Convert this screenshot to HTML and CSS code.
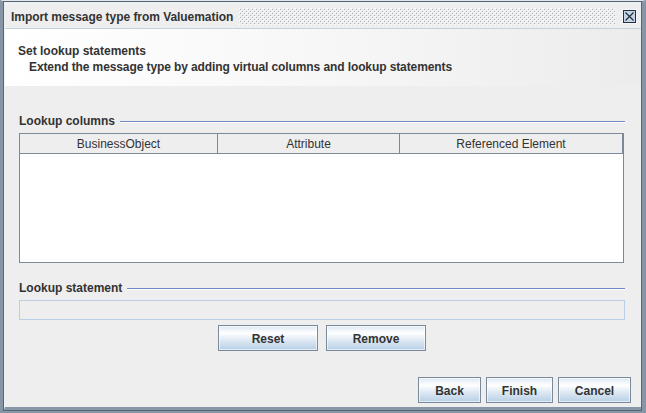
FILE: index.html
```html
<!DOCTYPE html>
<html>
<head>
<meta charset="utf-8">
<link rel="stylesheet" href="styles.css">
</head>
<body>
<div class="window">
  <div class="frame">
    <div class="pane">
      <div class="titlebar">
        <span class="title">Import message type from Valuemation</span>
        <svg class="bumps" xmlns="http://www.w3.org/2000/svg">
          <defs>
            <pattern id="bp" width="4" height="4" patternUnits="userSpaceOnUse">
              <rect x="0" y="0" width="1" height="1" fill="#ffffff"/>
              <rect x="2" y="2" width="1" height="1" fill="#ffffff"/>
              <rect x="1" y="1" width="1" height="1" fill="#a3abb3"/>
              <rect x="3" y="3" width="1" height="1" fill="#a3abb3"/>
            </pattern>
          </defs>
          <rect width="100%" height="100%" fill="url(#bp)"/>
        </svg>
        <svg class="close" width="15" height="15" viewBox="0 0 15 15" xmlns="http://www.w3.org/2000/svg">
          <rect x="0.5" y="0.5" width="14" height="14" fill="#c4d5e7" stroke="#f2f6fa"/>
          <rect x="1.5" y="1.5" width="12" height="12" fill="none" stroke="#26303c"/>
          <path d="M3.5 3.5 L11.5 11.5 M11.5 3.5 L3.5 11.5" stroke="#26303c" stroke-width="1.2" fill="none"/>
        </svg>
      </div>
      <div class="header">
        <div class="h-title">Set lookup statements</div>
        <div class="h-sub">Extend the message type by adding virtual columns and lookup statements</div>
      </div>
      <div class="content">
        <div class="section-title"><span>Lookup columns</span><div class="rule"></div></div>
        <div class="table">
          <div class="thead">
            <div class="th">BusinessObject</div>
            <div class="th">Attribute</div>
            <div class="th">Referenced Element</div>
          </div>
          <div class="tbody"></div>
        </div>
        <div class="section-title second"><span>Lookup statement</span><div class="rule"></div></div>
        <div class="field"></div>
        <div class="actions">
          <button class="btn wide">Reset</button>
          <button class="btn wide">Remove</button>
        </div>
      </div>
      <div class="footer">
        <button class="btn back">Back</button>
        <button class="btn finish">Finish</button>
        <button class="btn cancel">Cancel</button>
      </div>
    </div>
  </div>
</div>
</body>
</html>
```

FILE: styles.css
```css
html, body {
  margin: 0;
  padding: 0;
}
body {
  background: #eeeeee;
  font-family: "Liberation Sans", Arial, sans-serif;
  font-size: 12px;
  color: #333333;
}
.window {
  width: 646px;
  height: 413px;
  box-sizing: border-box;
  border-style: solid;
  border-color: #e3e7eb #8696a7 #8696a7 #8696a7;
  border-width: 1px 4px 2px 3px;
}
.frame {
  height: 100%;
  box-sizing: border-box;
  border: 1px solid #566678;
}
.pane {
  height: 100%;
  box-sizing: border-box;
  border-style: solid;
  border-color: #eef0f2 #eef0f2 #8696a7 #eef0f2;
  border-width: 3px 0 3px 1px;
  display: flex;
  flex-direction: column;
  background: #eeeeee;
}
.titlebar {
  height: 23px;
  border-bottom: 1px solid #c3d0de;
  background: #eeeeee;
  display: flex;
  align-items: center;
  flex: none;
}
.title {
  font-weight: bold;
  padding-left: 6px;
  line-height: 14px;
  white-space: nowrap;
  letter-spacing: -0.05px;
}
.bumps {
  flex: 1;
  height: 17px;
  margin: 0 6px 0 6px;
  display: block;
}
.close {
  display: block;
  margin-right: 4px;
  flex: none;
}
.header {
  height: 57px;
  box-sizing: border-box;
  background: linear-gradient(to right, #ffffff 0%, #f7f7f7 50%, #ececec 100%);
  padding: 14px 0 0 13px;
  font-weight: bold;
  line-height: 16px;
  flex: none;
}
.h-sub {
  padding-left: 11px;
  letter-spacing: -0.1px;
}
.content {
  padding: 28px 16px 0 14px;
  flex: none;
}
.section-title {
  display: flex;
  align-items: center;
  height: 14px;
  line-height: 14px;
  font-weight: bold;
}
.section-title span {
  white-space: nowrap;
}
.section-title .rule {
  flex: 1;
  height: 1px;
  margin-left: 5px;
  margin-top: 1px;
  background: #6d8bc2;
  box-shadow: 0 1px 0 #ffffff;
}
.section-title.second {
  margin-top: 18px;
}
.table {
  margin-top: 5px;
  margin-right: 1px;
  border: 1px solid #7a8a99;
  height: 130px;
  box-sizing: border-box;
  display: flex;
  flex-direction: column;
}
.thead {
  display: grid;
  grid-template-columns: 198px 182px 1fr;
  height: 20px;
  box-sizing: border-box;
  border-bottom: 1px solid #7a8a99;
  background: #eeeeee;
}
.th {
  border-right: 1px solid #7a8a99;
  text-align: center;
  line-height: 20px;
  white-space: nowrap;
}
.tbody {
  flex: 1;
  background: #ffffff;
}
.field {
  margin-top: 5px;
  height: 20px;
  box-sizing: border-box;
  border: 1px solid #b8cfe5;
  background: #eeeeee;
}
.actions {
  margin-top: 5px;
  display: flex;
  justify-content: center;
  gap: 8px;
}
.btn {
  height: 26px;
  box-sizing: border-box;
  border: 1px solid #7a8a99;
  box-shadow: inset 0 0 0 1px rgba(255, 255, 255, 0.6);
  background: linear-gradient(to bottom, #dde8f3 0%, #ffffff 30%, #dde8f3 60%, #b8cfe5 100%);
  font-family: "Liberation Sans", Arial, sans-serif;
  font-size: 12px;
  font-weight: bold;
  color: #333333;
  padding: 1px 0 0 0;
  margin: 0;
  border-radius: 0;
}
.btn.wide {
  width: 100px;
}
.btn.back {
  width: 63px;
}
.btn.finish {
  width: 67px;
}
.btn.cancel {
  width: 73px;
}
.footer {
  margin-top: auto;
  display: flex;
  justify-content: flex-end;
  gap: 5px;
  padding: 0 10px 4px 0;
}
```
